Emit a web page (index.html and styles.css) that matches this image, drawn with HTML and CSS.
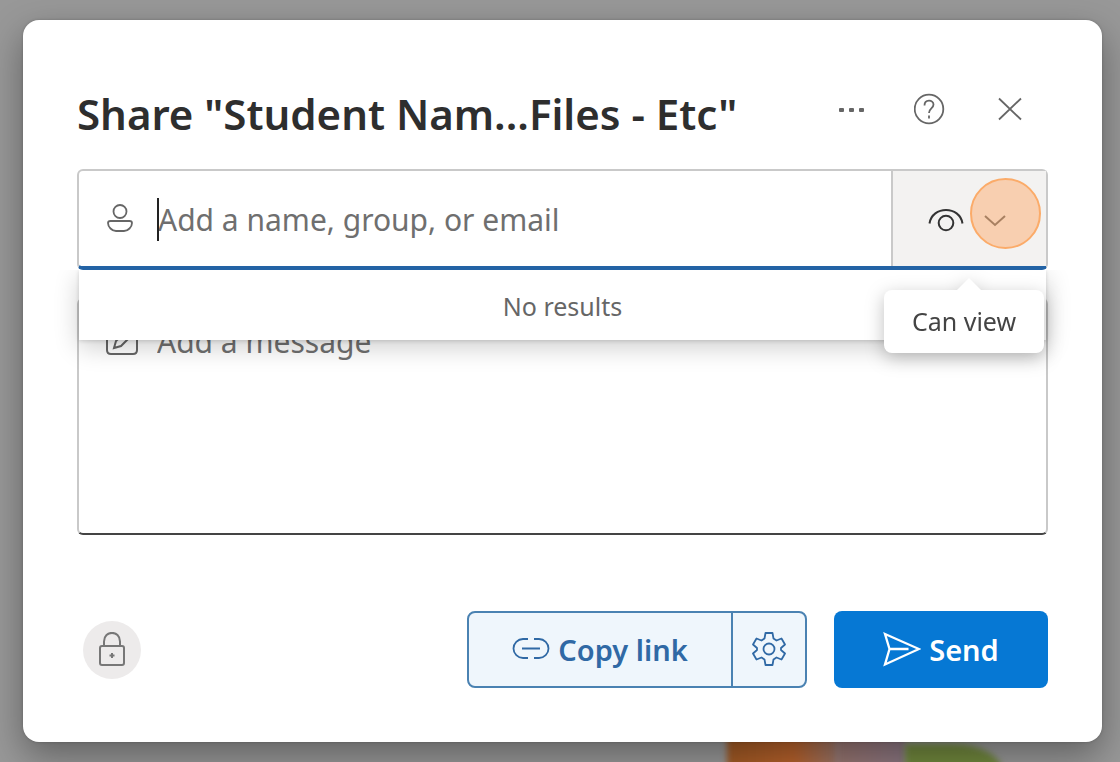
FILE: index.html
```html
<!DOCTYPE html>
<html lang="en">
<head>
<meta charset="utf-8">
<title>Share</title>
<link rel="stylesheet" href="styles.css">
</head>
<body class="page">
<div class="backdrop" aria-hidden="true"><span class="blob blob-orange"></span><span class="blob blob-purple"></span><span class="blob blob-green"></span></div>
<main class="dialog" role="dialog" aria-labelledby="title">
  <header class="header">
    <h1 class="title" id="title">Share "Student Nam...Files - Etc"</h1>
    <div class="tools">
      <button class="tool" type="button" aria-label="More options">
        <svg width="32" height="32" viewBox="0 0 32 32" fill="currentColor"><rect x="5" y="15" width="5" height="4" rx="1"/><rect x="15" y="15" width="5" height="4" rx="1"/><rect x="25" y="15" width="5" height="4" rx="1"/></svg>
      </button>
      <button class="tool" type="button" aria-label="Help">
        <svg width="32" height="32" viewBox="0 0 32 32" fill="none" stroke="currentColor" stroke-width="1.800"><circle cx="15" cy="16" r="14.300"/><path d="M10.500 12.500c0-6.500 9-6 9-1 0 4-4.500 4-4.500 8.500"/><path d="M15 22.500v3"/></svg>
      </button>
      <button class="tool" type="button" aria-label="Close">
        <svg width="32" height="32" viewBox="0 0 32 32" fill="none" stroke="currentColor" stroke-width="1.800"><path d="M5 5.500l22 21M27 5.500l-22 21"/></svg>
      </button>
    </div>
  </header>
  <form class="form">
    <div class="people">
      <label class="people-label" for="people" aria-label="People">
        <svg width="28" height="32" viewBox="0 0 28 32" fill="none" stroke="currentColor" stroke-width="1.800"><circle cx="14" cy="8.500" r="6.500"/><path d="M4.500 18h19q2.500 0 2.500 2c0 4-4 8-8 8h-8c-4 0-8-4-8-8q0-2 2.500-2z"/></svg>
      </label>
      <div class="people-entry">
        <input class="people-input" id="people" type="text" placeholder="Add a name, group, or email">
        <span class="caret"></span>
      </div>
      <button class="access" type="button" aria-label="Can view">
        <svg width="36" height="28" viewBox="0 0 36 28" fill="none" stroke="currentColor" stroke-width="2"><path d="M1.500 16.500C4-1.500 32-1.500 34.500 16.500"/><circle cx="18" cy="16" r="7.300"/></svg>
        <svg class="chevron" width="24" height="24" viewBox="0 0 24 24" fill="none" stroke="currentColor" stroke-width="2"><path d="M1 7l10 9 10-9"/></svg>
      </button>
      <span class="spot"></span>
      <div class="results">No results</div>
      <div class="tooltip" role="tooltip">Can view</div>
    </div>
    <div class="message">
      <label class="message-label" for="message" aria-label="Message">
        <svg width="32" height="32" viewBox="0 0 32 32" fill="none" stroke="currentColor" stroke-width="2"><path d="M18 3H5q-4 0-4 4v17q0 4 4 4h22q4 0 4-4V12"/><path d="M8 22l2-7L24 1l5 5-14 14z"/></svg>
      </label>
      <textarea class="message-input" id="message" placeholder="Add a message"></textarea>
    </div>
    <footer class="footer">
      <button class="lock" type="button" aria-label="Sharing permissions">
        <svg width="28" height="36" viewBox="0 0 28 36" fill="none" stroke="currentColor" stroke-width="2"><rect x="2" y="14" width="24" height="19" rx="2"/><path d="M6 14V9.500c0-11.500 16-11.500 16 0V14"/><path d="M14 21v5M11.500 23.500h5"/></svg>
      </button>
      <div class="split">
        <button class="copy" type="button">
          <svg width="38" height="28" viewBox="0 0 38 28" fill="none" stroke="currentColor" stroke-width="1.800"><path d="M16 3h-5a9.500 9.500 0 0 0 0 19h5M22 3h5a9.500 9.500 0 0 1 0 19h-5M10 12.500h18"/></svg>
          <span>Copy link</span>
        </button>
        <button class="settings" type="button" aria-label="Link settings">
          <svg width="34" height="36" viewBox="1 1 34 36" fill="none" stroke="currentColor" stroke-width="1.800" stroke-linejoin="round"><circle cx="18" cy="18" r="5.500"/><path d="M14.500 2h7l1 5.500 3 2 5-2 3.500 6-4 3.500v2l4 3.500-3.500 6-5-2-3 2-1 5.500h-7l-1-5.500-3-2-5 2-3.500-6 4-3.500v-2l-4-3.500 3.500-6 5 2 3-2z"/></svg>
        </button>
      </div>
      <button class="send" type="submit">
        <svg width="38" height="36" viewBox="0 0 38 36" fill="none" stroke="currentColor" stroke-width="2.300"><path d="M2 2L36 17 2 32.500 6.500 17zM6.500 17h19"/></svg>
        <span>Send</span>
      </button>
    </footer>
  </form>
</main>
</body>
</html>
```
FILE: styles.css
```css
* { box-sizing: border-box; }
.page {
  margin: 0;
  min-height: 100vh;
  padding: 20px 18px 20px 23px;
  background: #989898;
  font-family: "Noto Sans", "Open Sans", sans-serif;
  font-size: 30px;
  line-height: 36px;
  color: #333;
  overflow: hidden;
}
button, input, textarea { font: inherit; color: inherit; margin: 0; padding: 0; border: 0; background: none; }
svg { display: block; flex: none; }
.backdrop { position: absolute; inset: 0; overflow: hidden; }
.blob { position: absolute; filter: blur(3px); }
.blob-orange { left: 727px; bottom: -10px; width: 112px; height: 50px; background: linear-gradient(90deg, #a25a24, #b8622c 60%, #99756a); }
.blob-purple { left: 836px; bottom: -10px; width: 70px; height: 50px; background: linear-gradient(90deg, #98756f, #8b7683); }
.blob-green { left: 905px; bottom: -40px; width: 98px; height: 58px; border-radius: 0 50% 0 0; background: #71883d; }
.dialog {
  position: relative;
  min-height: calc(100vh - 40px);
  padding: 64px 54px 54px;
  border-radius: 16px;
  background: #fff;
  box-shadow: 0 0 3px rgba(0, 0, 0, .2), 0 14px 36px rgba(0, 0, 0, .36);
}
.header { display: flex; align-items: center; height: 60px; }
.title { flex: 1; margin: 0; font-size: 42px; line-height: 60px; font-weight: 600; white-space: nowrap; color: #2e2e2e; }
.tools { display: flex; gap: 48px; padding: 0 22px 10px 0; color: #666; }
.tool { width: 32px; height: 32px; }
.form { padding-top: 25px; }
.people {
  position: relative;
  z-index: 2;
  display: flex;
  height: 101px;
  border: 2px solid #c9c9c9;
  border-bottom: 4px solid #2363a5;
  border-radius: 6px;
  background: #fff;
}
.people-label { display: flex; align-items: center; padding: 0 24px 0 27px; color: #666; }
.people-entry { position: relative; flex: 1; display: flex; }
.people-input { width: 100%; padding-top: 3px; outline: 0; }
.people-input::placeholder, .message-input::placeholder { color: #6f6f6f; opacity: 1; }
.caret { position: absolute; left: -1px; top: 27px; width: 2px; height: 43px; background: #222; }
.access {
  display: flex;
  align-items: center;
  gap: 20px;
  width: 155px;
  padding: 5px 0 0 35px;
  border-left: 2px solid #c9c9c9;
  background: #f3f2f1;
}
.chevron { color: #444; }
.spot {
  position: absolute;
  right: 5px;
  top: 7px;
  width: 71px;
  height: 71px;
  border: 2px solid #fbab69;
  border-radius: 50%;
  background: rgba(252, 178, 122, .55);
  pointer-events: none;
}
.results {
  position: absolute;
  left: 0;
  right: 0;
  top: 99px;
  height: 70px;
  padding-top: 18px;
  background: #fff;
  box-shadow: 0 7px 26px rgba(0, 0, 0, .2), 0 1px 4px rgba(0, 0, 0, .15);
  clip-path: inset(0 -40px -60px -40px);
  text-align: center;
  font-size: 25px;
  color: #666;
}
.tooltip {
  position: absolute;
  right: 2px;
  top: 119px;
  width: 160px;
  height: 63px;
  padding-top: 13px;
  border-radius: 8px;
  background: #fff;
  filter: drop-shadow(0 5px 9px rgba(0, 0, 0, .25));
  text-align: center;
  font-size: 25px;
  color: #444;
}
.tooltip::before {
  content: "";
  position: absolute;
  left: 73px;
  top: -12px;
  border: solid transparent;
  border-width: 0 12px 12px;
  border-bottom-color: #fff;
}
.message {
  display: flex;
  height: 237px;
  margin-top: 28px;
  border: 2px solid #c9c9c9;
  border-bottom-color: #444;
  border-radius: 6px;
}
.message-label { padding: 26px 19px 0 27px; color: #666; }
.message-input { flex: 1; padding-top: 24px; resize: none; outline: 0; }
.footer { display: flex; align-items: center; padding-top: 76px; font-size: 29px; font-weight: 600; }
.lock { display: grid; place-items: center; width: 58px; height: 58px; margin: 0 auto 0 6px; border-radius: 50%; background: #edebeb; color: #777; }
.split { display: flex; height: 77px; border: 2px solid #4a82b2; border-radius: 8px; background: #eff6fc; color: #3069a5; }
.copy { display: flex; align-items: center; justify-content: center; gap: 8px; width: 262px; }
.settings { display: grid; place-items: center; width: 74px; border-left: 2px solid #4a82b2; }
.send { display: flex; align-items: center; justify-content: center; gap: 8px; width: 214px; height: 77px; margin-left: 27px; border-radius: 8px; background: #0678d4; color: #fff; }
```
